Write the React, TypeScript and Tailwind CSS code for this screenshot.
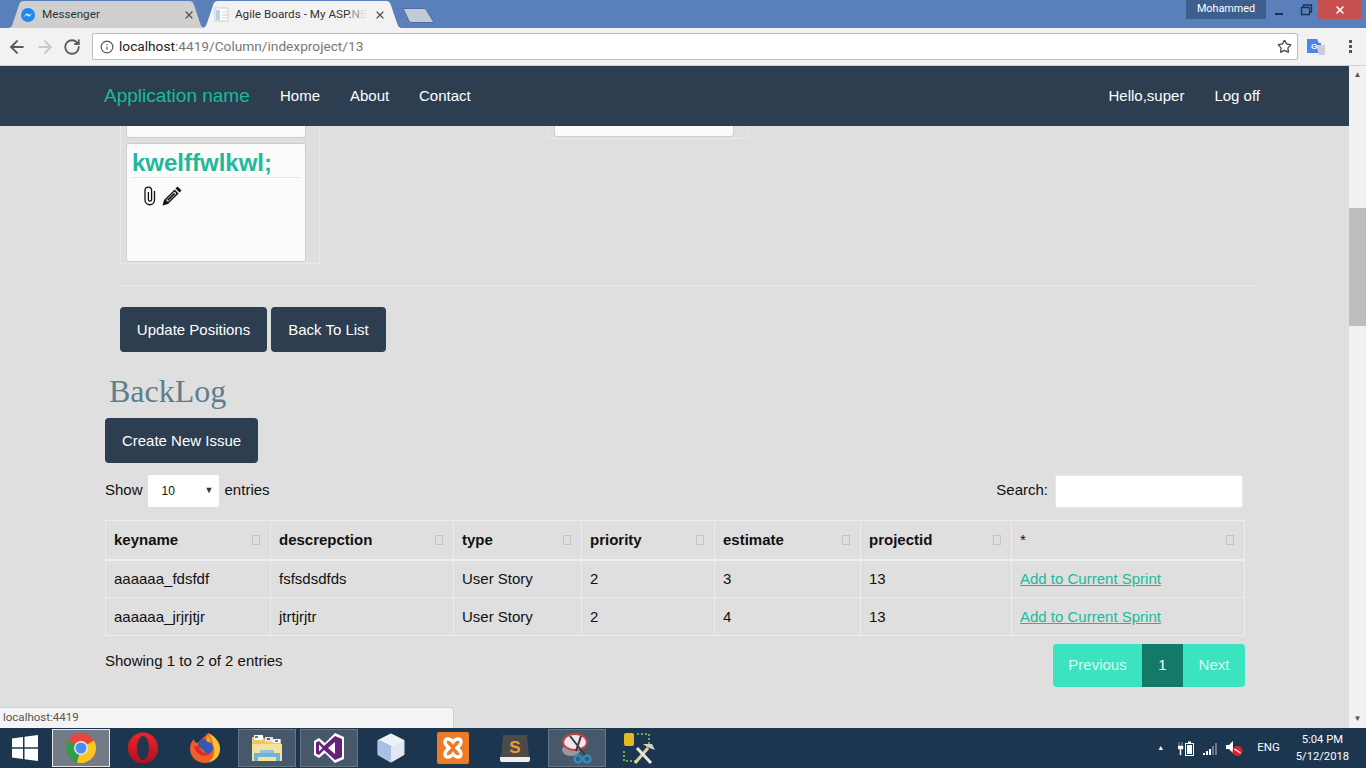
import React from 'react'
import { ArrowLeft, ArrowRight, RotateCw, Info, Star, X } from 'lucide-react'

const rows = [
  ['aaaaaa_fdsfdf', 'fsfsdsdfds', 'User Story', '2', '3', '13'],
  ['aaaaaa_jrjrjtjr', 'jtrtjrjtr', 'User Story', '2', '4', '13'],
]

const headers = [
  { label: 'keyname', width: 'w-[165px]' },
  { label: 'descrepction', width: 'w-[183px]' },
  { label: 'type', width: 'w-[128px]' },
  { label: 'priority', width: 'w-[133px]' },
  { label: 'estimate', width: 'w-[146px]' },
  { label: 'projectid', width: 'w-[151px]' },
  { label: '*', width: 'w-[233px]' },
]

const TabShape = ({ fill }: { fill: string }) => (
  <svg className="absolute inset-0 h-full w-full" viewBox="0 0 200 27" preserveAspectRatio="none">
    <path d="M0 27 C4 27 5 25 6 22 L12 4 C13 1 14 0 18 0 H182 C186 0 187 1 188 4 L194 22 C195 25 196 27 200 27 Z" fill={fill} />
  </svg>
)

const Paperclip = () => (
  <svg className="h-5 w-[14px]" viewBox="0 0 14 20" fill="none" stroke="#111" strokeWidth="1.3">
    <path d="M11.5 5 V14 A4.7 4.7 0 0 1 2 14 V4.5 A3.3 3.3 0 0 1 8.6 4.5 V13.5 A1.6 1.6 0 0 1 5.4 13.5 V6" />
  </svg>
)

const Pencil = () => (
  <svg className="h-5 w-5" viewBox="0 0 20 20">
    <path d="M15.5 0.5 L19.5 4.5 L17.5 6.5 L13.5 2.5 Z" fill="#111" />
    <path d="M12.6 3.4 L16.6 7.4 L6 18 L0.5 19.5 L2 14 Z" fill="#111" />
    <path d="M12.4 5.6 L14.4 7.6 L6 16 L4 14 Z" fill="#fff" />
    <path d="M12 6.8 L13.2 8 L6.2 15 L5 13.8 Z" fill="#111" />
  </svg>
)

const SortMark = () => <span className="h-[10px] w-[8px] border border-[#c4c4c4]" />

const Chrome = () => (
  <svg className="h-[30px] w-[30px]" viewBox="0 0 30 30">
    <circle cx="15" cy="15" r="15" fill="#e8453c" />
    <path d="M15 15 L2 7.5 A15 15 0 0 0 11 29.5 Z" fill="#2f9e4b" />
    <path d="M15 15 L11 29.5 A15 15 0 0 0 28 7.5 Z" fill="#f9c623" />
    <circle cx="15" cy="15" r="7" fill="#e8e8e8" />
    <circle cx="15" cy="15" r="5.5" fill="#4c8bf0" />
  </svg>
)

const Opera = () => (
  <svg className="h-[32px] w-[32px]" viewBox="0 0 32 32">
    <defs>
      <linearGradient id="opera" x1="0" y1="0" x2="0" y2="1">
        <stop offset="0" stopColor="#f0242c" />
        <stop offset="1" stopColor="#b30f1a" />
      </linearGradient>
    </defs>
    <ellipse cx="16" cy="16" rx="15" ry="15.5" fill="url(#opera)" />
    <ellipse cx="16" cy="16" rx="6" ry="12" fill="#1f3750" />
  </svg>
)

const Firefox = () => (
  <svg className="h-[32px] w-[32px]" viewBox="0 0 32 32">
    <path d="M19 1 C27 5 31 11 31 17 C31 25 24 31 16 31 C7 31 1 24 1 17 C1 12 3 9 5 7 C5 10 7 11 9 11 C11 8 15 6 19 1 Z" fill="#ee5f2a" />
    <path d="M19 1 C27 5 31 11 31 17 C31 24 26 29 20 30 C25 26 27 19 24 13 C24 9 22 5 19 1 Z" fill="#fcc02e" />
    <path d="M14 7 C18 7 24 10 24 16 C24 20 20 22 17 21 L13 17 L9 14 C9 11 11 8 14 7 Z" fill="#2f5ab5" />
    <path d="M18 3 C21 5 22 8 22 11 L17 9 C18 7 18 5 18 3 Z" fill="#f8a321" />
    <path d="M5 14 C7 24 17 27 23 20 C17 23 11 20 10 14 Z" fill="#dd2c2c" />
  </svg>
)

const Explorer = () => (
  <svg className="h-[30px] w-8" viewBox="0 0 32 30">
    <path d="M1 4 H12 L14 6 H30 V27 H1 Z" fill="#e9c867" />
    <rect x="3" y="2" width="9" height="5" fill="#fff" />
    <rect x="4" y="3" width="3" height="2" fill="#3a9a48" />
    <rect x="14" y="4" width="8" height="5" fill="#e2e2e2" />
    <rect x="16" y="5" width="3" height="2" fill="#d43c2e" />
    <rect x="22" y="6" width="7" height="4" fill="#fff" />
    <rect x="24" y="7" width="3" height="2" fill="#3f8fd2" />
    <path d="M1 11 H31 V28 H1 Z" fill="#f6e29a" />
    <path d="M3 28 V20 H29 V28 H25 V24 H7 V28 Z" fill="#6fb3d9" />
    <rect x="9" y="17" width="14" height="3" fill="#8cc5e3" />
  </svg>
)

const VisualStudio = () => (
  <svg className="h-[32px] w-[32px]" viewBox="0 0 32 32">
    <path d="M22 1 L31 5 V27 L22 31 L12 21 L6 26 L1 23 V9 L6 6 L12 11 Z" fill="#fff" />
    <path d="M22 4 L29 7 V25 L22 28 L11 18 L6 23 L3 21.5 V10.5 L6 9 L11 14 Z" fill="#68217a" />
    <path d="M22 10 V22 L15 16 Z M6 12.5 L9.5 16 L6 19.5 Z" fill="#fff" />
  </svg>
)

const Cube = () => (
  <svg className="h-[30px] w-[28px]" viewBox="0 0 28 30">
    <path d="M14 2 L26 8 V21 L14 28 L2 21 V8 Z" fill="#dbe5f2" stroke="#dbe5f2" strokeWidth="3" strokeLinejoin="round" />
    <path d="M14 2 L26 8 L14 14 L2 8 Z" fill="#eef4f4" stroke="#eef4f4" strokeWidth="2" strokeLinejoin="round" />
    <path d="M2 8 L14 14 V28 L2 21 Z" fill="#a9c0e4" stroke="#a9c0e4" strokeWidth="2" strokeLinejoin="round" />
    <path d="M14 14 L26 8 V21 L14 28 Z" fill="#e3e9f3" />
  </svg>
)

const Xampp = () => (
  <svg className="h-[32px] w-[32px]" viewBox="0 0 32 32">
    <rect width="32" height="32" rx="2" fill="#ee7a26" />
    <path
      d="M8 10 C8 6 13 6 16 10 C19 6 24 6 24 10 C24 13 21 15 20 16 C21 17 24 19 24 22 C24 26 19 26 16 22 C13 26 8 26 8 22 C8 19 11 17 12 16 C11 15 8 13 8 10 Z"
      fill="none"
      stroke="#fff"
      strokeWidth="3.4"
    />
  </svg>
)

const Sublime = () => (
  <svg className="h-[30px] w-[32px]" viewBox="0 0 32 30">
    <path d="M1 24 H31 V27 Q31 29 29 29 H3 Q1 29 1 27 Z" fill="#efefef" />
    <path d="M4 2 H28 L30 24 H2 Z" fill="#4b4b49" />
    <text x="16" y="20" textAnchor="middle" fontFamily="Liberation Sans, sans-serif" fontWeight="700" fontSize="17" fill="#ee9a35">
      S
    </text>
  </svg>
)

const Snip = () => (
  <svg className="h-[34px] w-[32px]" viewBox="0 0 32 34">
    <ellipse cx="10" cy="19" rx="9" ry="6" fill="#9a9a9e" />
    <ellipse cx="14" cy="11" rx="12" ry="8" fill="#f0e8ea" stroke="#c2424e" strokeWidth="2" />
    <path d="M9 5 L24 24 M20 5 L15 20" stroke="#3a3a3a" strokeWidth="2" />
    <circle cx="26" cy="28" r="3.5" fill="none" stroke="#2c8cc5" strokeWidth="2.5" />
    <circle cx="17" cy="28" r="3.5" fill="none" stroke="#2c8cc5" strokeWidth="2.5" />
  </svg>
)

const Tools = () => (
  <svg className="h-[34px] w-[32px]" viewBox="0 0 32 34">
    <rect x="1" y="2" width="10" height="13" rx="2" fill="#e8b820" />
    <path d="M14 3 H26 V14 M1 20 V30 H12" fill="none" stroke="#6fae4a" strokeWidth="2" strokeDasharray="2 2" />
    <path d="M12 32 L25 17" stroke="#e3d29a" strokeWidth="3" />
    <path d="M14 17 L28 32" stroke="#e5e5e5" strokeWidth="3" />
    <path d="M20 13 H29 L32 19 L24 16 Z" fill="#cfcfcf" />
  </svg>
)

const taskbarIcons = [
  { icon: <Chrome />, box: 'border border-[#e6e6e6] bg-[#737c86]' },
  { icon: <Opera />, box: '' },
  { icon: <Firefox />, box: '' },
  { icon: <Explorer />, box: 'border border-[#667585] bg-[#47586a]' },
  { icon: <VisualStudio />, box: 'border border-[#667585] bg-[#47586a]' },
  { icon: <Cube />, box: '' },
  { icon: <Xampp />, box: '' },
  { icon: <Sublime />, box: '' },
  { icon: <Snip />, box: 'border border-[#667585] bg-[#47586a]' },
  { icon: <Tools />, box: '' },
]

export default function App() {
  return (
    <div className="relative flex h-screen w-full flex-col overflow-hidden font-['Liberation_Sans',Arial,sans-serif] text-[15px] text-[#111]">
      {/* browser tabs */}
      <div className="relative flex h-7 shrink-0 items-end bg-[#5a80bb] pl-[7px]">
        <div className="relative flex h-[27px] w-[199px] items-center pl-[14px] pr-[11px] font-['Roboto',sans-serif] text-[11.7px] text-[#333]">
          <TabShape fill="#cfcfcf" />
          <svg className="relative mr-[7px] h-[14px] w-[14px] shrink-0" viewBox="0 0 14 14">
            <circle cx="7" cy="7" r="7" fill="#1e88f0" />
            <path d="M2.5 9 L6 5.2 L8 7 L11.5 5 L8 8.8 L6 7 Z" fill="#fff" />
          </svg>
          <span className="relative flex-1">Messenger</span>
          <X className="relative h-3 w-3 text-[#555]" strokeWidth={2.5} />
        </div>
        <div className="relative -ml-[5px] flex h-[27px] w-[202px] items-center pl-[13px] pr-[17px] font-['Roboto',sans-serif] text-[11.7px] text-[#333]">
          <TabShape fill="#f2f2f2" />
          <svg className="relative mr-[6px] h-[15px] w-[15px] shrink-0" viewBox="0 0 15 15">
            <rect x="1" y="1" width="13" height="13" fill="#fff" stroke="#c5cdd8" />
            <rect x="2" y="3" width="4" height="10" fill="#b7d3ec" />
            <path d="M8 5h5M8 8h5M8 11h5" stroke="#d0d0d0" />
          </svg>
          <span className="relative flex-1 whitespace-nowrap">
            Agile Boards - My ASP.
            <span className="text-[#999]">N</span>
            <span className="text-[#ddd]">E</span>
          </span>
          <X className="relative h-3 w-3 shrink-0 text-[#555]" strokeWidth={2.5} />
        </div>
        <svg className="mb-[5px] -ml-[1px] h-[15px] w-[33px]" viewBox="0 0 33 15">
          <path d="M1 0.5 H21 C23 0.5 24 1 25 3 L32 14.5 H10 C8 14.5 7.5 14 6.5 12 Z" fill="#c4cad4" stroke="#4f6d9c" />
        </svg>
        <div className="ml-auto flex h-full items-start self-start pr-[4px]">
          <span className="flex h-[19px] w-[80px] items-center justify-center bg-[#3d5f8e] font-['Roboto',sans-serif] text-[10.8px] text-white">
            Mohammed
          </span>
          <div className="flex h-[19px] w-[26px] items-end justify-center pb-[4px]">
            <span className="h-[2px] w-[8px] bg-[#1c2f4d]" />
          </div>
          <svg className="h-[19px] w-[26px]" viewBox="0 0 26 19">
            <path d="M9.5 7.5h8v7h-8z M11.5 7.5v-2.5h8v7h-2" fill="none" stroke="#1c2f4d" strokeWidth="1.3" />
          </svg>
          <div className="flex h-[19px] w-[44px] items-center justify-center rounded-b-[2px] bg-[#c75050]">
            <X className="h-[12px] w-[12px] text-white" strokeWidth={3} />
          </div>
        </div>
      </div>

      {/* browser toolbar */}
      <div className="flex h-[38px] shrink-0 items-center border-b border-[#d2d2d2] bg-[#f2f2f2]">
        <div className="flex w-[92px] items-center pl-[7px]">
          <ArrowLeft className="h-5 w-5 text-[#5a5a5a]" strokeWidth={2.4} />
          <ArrowRight className="ml-2 h-5 w-5 text-[#c8c8c8]" strokeWidth={2.4} />
          <RotateCw className="ml-2 h-[18px] w-[18px] text-[#5a5a5a]" strokeWidth={2.4} />
        </div>
        <div className="flex h-[27px] w-[1206px] items-center rounded-[2px] border border-[#bdbdbd] bg-white pl-[7px] pr-[5px] font-['Roboto',sans-serif] text-[13.7px]">
          <Info className="mr-[5px] h-[14px] w-[14px] text-[#555]" strokeWidth={2} />
          <span className="text-[#222]">localhost</span>
          <span className="text-[#777]">:4419/Column/indexproject/13</span>
          <Star className="ml-auto h-[15px] w-[15px] text-[#444]" strokeWidth={2} />
        </div>
        <svg className="ml-[9px] h-[18px] w-[18px]" viewBox="0 0 18 18">
          <path d="M0 1 H10 L12 5 H14 V15 H0 Z" fill="#4a86e8" />
          <path d="M9 7 H18 V17 L12 17 Z" fill="#c9ced6" />
          <text x="4" y="11" fontFamily="Liberation Sans, sans-serif" fontWeight="700" fontSize="8" fill="#fff">
            G
          </text>
        </svg>
        <div className="ml-[24px] flex flex-col gap-[2px]">
          <span className="h-[3px] w-[3px] bg-[#555]" />
          <span className="h-[3px] w-[3px] bg-[#555]" />
          <span className="h-[3px] w-[3px] bg-[#555]" />
        </div>
      </div>

      {/* page + scrollbar */}
      <div className="flex min-h-0 flex-1">
        <div className="flex min-w-0 flex-1 flex-col overflow-hidden bg-[#dfdfdf]">
          <nav className="flex h-[60px] shrink-0 items-center bg-[#2c3e50] pl-[104px] pr-[89px] pt-[1px] text-white">
            <span className="w-[176px] text-[19px] text-[#18bc9c]">Application name</span>
            <span className="w-[70px]">Home</span>
            <span className="w-[69px]">About</span>
            <span>Contact</span>
            <span className="ml-auto">Hello,super</span>
            <span className="ml-[30px]">Log off</span>
          </nav>

          {/* board columns */}
          <div className="flex h-[138px] shrink-0 items-start pl-[120px]">
            <div className="flex h-[138px] w-[200px] flex-col gap-[5px] border-x border-b border-[#e9e9e9] pl-[5px] pb-[1px]">
              <div className="h-[12px] w-[180px] rounded-b-[3px] border-x border-b border-[#cfcfcf] bg-[#fbfbfb]" />
              <div className="flex h-[120px] w-[180px] flex-col rounded-[3px] border border-[#cfcfcf] bg-[#fbfbfb] px-[5px] pt-[5px]">
                <h3 className="border-b border-[#e5e5e5] text-[24px] font-bold leading-[28px] text-[#1fb899]">kwelffwlkwl;</h3>
                <div className="mt-[8px] flex items-center gap-[5px] pl-[11px]">
                  <Paperclip />
                  <Pencil />
                </div>
              </div>
            </div>
            <div className="ml-[228px] h-[13px] w-[200px] border-x border-b border-[#e9e9e9] pl-[5px]">
              <div className="h-[11px] w-[180px] rounded-b-[3px] border-x border-b border-[#cfcfcf] bg-[#fbfbfb]" />
            </div>
          </div>

          <hr className="ml-[120px] mr-[89px] mt-[21px] border-[#e9e9e9]" />

          <div className="mt-[21px] flex gap-1 pl-[120px]">
            <button className="h-[45px] w-[147px] rounded bg-[#2c3e50] pt-[1px] text-white">Update Positions</button>
            <button className="h-[45px] w-[115px] rounded bg-[#2c3e50] pt-[1px] text-white">Back To List</button>
          </div>

          <div className="pl-[105px] pr-[104px]">
            <h2 className="mt-[21px] pl-[4px] font-['Liberation_Serif',serif] text-[32px] leading-[36px] text-[#607d8b]">BackLog</h2>
            <button className="mt-[9px] h-[45px] w-[153px] rounded bg-[#2c3e50] pt-[1px] text-white">Create New Issue</button>

            <div className="mt-[12px] flex h-[32px] items-center">
              <span className="pb-[2px]">Show</span>
              <div className="ml-[5px] flex h-[32px] w-[71px] items-center justify-between rounded-[2px] bg-white pl-[14px] pr-[5px] text-[12px]">
                <span>10</span>
                <span className="text-[9px] text-[#333]">▼</span>
              </div>
              <span className="ml-[6px] pb-[2px]">entries</span>
              <span className="ml-auto pb-[2px]">Search:</span>
              <div className="ml-[7px] mr-[2px] h-[33px] w-[188px] rounded-[2px] border border-[#e3e8ef] bg-white" />
            </div>

            <table className="mt-[13px] w-[1139px] table-fixed border-collapse">
              <thead>
                <tr className="h-[39px] border-b-2 border-[#f0f0f0]">
                  {headers.map((h) => (
                    <th
                      key={h.label}
                      className={`${h.width} border border-[#ececec] px-2 text-left ${h.label === '*' ? 'font-normal' : 'font-bold'}`}>
                      <div className="flex items-center justify-between pr-[2px]">
                        <span>{h.label}</span>
                        <SortMark />
                      </div>
                    </th>
                  ))}
                </tr>
              </thead>
              <tbody>
                {rows.map((row, r) => (
                  <tr key={row[0]} className="h-[38px]">
                    {row.map((cell, i) => (
                      <td key={i} className={`border border-[#ececec] px-2 ${r === 1 ? 'pt-[2px]' : ''}`}>
                        {cell}
                      </td>
                    ))}
                    <td className={`border border-[#ececec] px-2 ${r === 1 ? 'pt-[2px]' : ''}`}>
                      <a className="text-[#18bc9c] underline">Add to Current Sprint</a>
                    </td>
                  </tr>
                ))}
              </tbody>
            </table>

            <div className="mt-[8px] flex items-start justify-between">
              <span className="mt-[6px]">Showing 1 to 2 of 2 entries</span>
              <div className="flex h-[43px] overflow-hidden rounded text-[#dcfaf3]">
                <span className="flex w-[89px] items-center justify-center bg-[#3be3c1]">Previous</span>
                <span className="flex w-[41px] items-center justify-center bg-[#127a66] text-white">1</span>
                <span className="flex w-[62px] items-center justify-center bg-[#3be3c1]">Next</span>
              </div>
            </div>
          </div>
        </div>

        {/* scrollbar */}
        <div className="flex w-[17px] shrink-0 flex-col items-center bg-[#f1f1f1]">
          <span className="mt-[5px] text-[8px] leading-[8px] text-[#555]">▲</span>
          <div className="mt-[129px] h-[118px] w-full bg-[#bdbdbd]" />
          <span className="mb-[5px] mt-auto text-[8px] leading-[8px] text-[#555]">▼</span>
        </div>
      </div>

      {/* status bubble sits over the page */}
      <div className="absolute bottom-[40px] left-0 flex h-[21px] w-[454px] items-center rounded-tr-[3px] border-r border-t border-[#d0d0d0] bg-[#f4f4f4] pl-[3px] font-['Roboto',sans-serif] text-[11.5px] text-[#555]">
        localhost:4419
      </div>

      {/* windows taskbar */}
      <div className="flex h-10 shrink-0 items-center bg-[#1d3650] text-white">
        <div className="flex w-[50px] justify-center">
          <svg className="h-[26px] w-[26px]" viewBox="0 0 26 26">
            <path d="M0 3.5 L11 2 V12.3 H0 Z M12.5 1.8 L26 0 V12.3 H12.5 Z M0 13.7 H11 V24 L0 22.5 Z M12.5 13.7 H26 V26 L12.5 24.2 Z" fill="#fff" />
          </svg>
        </div>
        {taskbarIcons.map((item, i) => (
          <div key={i} className="flex h-full w-[62px] items-center justify-center">
            <div className={`flex h-[38px] w-[58px] items-center justify-center ${item.box}`}>{item.icon}</div>
          </div>
        ))}
        <div className="ml-auto flex items-center pr-[17px] font-['Roboto',sans-serif] text-[11.5px]">
          <span className="mr-[14px] text-[7px]">▲</span>
          <svg className="mr-[9px] h-[15px] w-[16px]" viewBox="0 0 16 15">
            <path d="M1 1v4M4 1v4M0 5h5v3H3v6H2V8H0z" fill="#fff" stroke="#fff" strokeWidth="0.5" />
            <rect x="7.5" y="2.5" width="8" height="12" fill="none" stroke="#fff" />
            <rect x="9" y="4" width="5" height="9" fill="#fff" />
            <rect x="10" y="0.5" width="3" height="2" fill="#fff" />
          </svg>
          <svg className="mr-[8px] h-[13px] w-[15px]" viewBox="0 0 15 13">
            <path d="M0 11h2v2H0z M3 9h2v4H3z M6 7h2v6H6z" fill="#fff" />
            <path d="M9 4h2v9H9z M12 1h2v12h-2z" fill="#778" />
          </svg>
          <svg className="mr-[14px] h-[16px] w-[17px]" viewBox="0 0 17 16">
            <path d="M0 5h3l4-4v12L3 9H0z" fill="#fff" />
            <circle cx="11.5" cy="11" r="5" fill="#e0202a" />
            <path d="M8.5 9 L14.5 13" stroke="#fff" strokeWidth="1.5" />
          </svg>
          <span className="mr-[16px]">ENG</span>
          <div className="flex flex-col items-center text-[11.2px] leading-[17px]">
            <span>5:04 PM</span>
            <span>5/12/2018</span>
          </div>
        </div>
      </div>
    </div>
  )
}
